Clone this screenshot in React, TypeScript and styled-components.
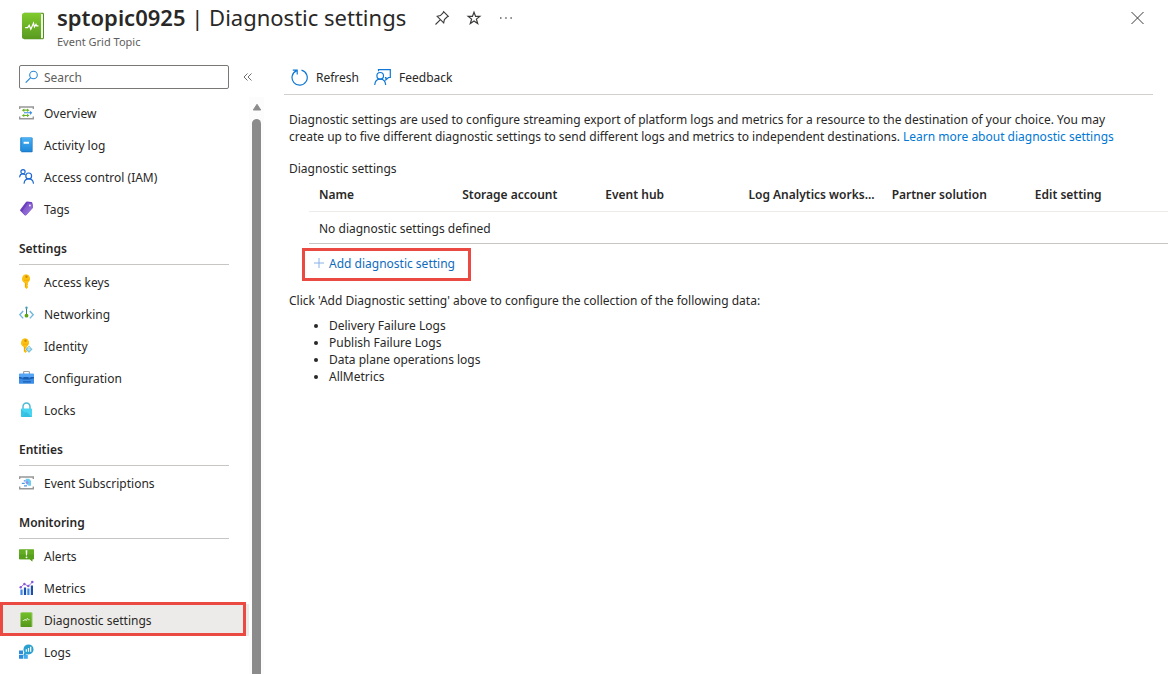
import React, { ReactNode } from "react";
import styled, { createGlobalStyle } from "styled-components";

const text = "#292827";
const muted = "#605e5c";
const link = "#0f6cbd";
const highlight = "#eb4a42";

const GlobalStyle = createGlobalStyle`
  *, *::before, *::after { box-sizing: border-box; }
  body {
    margin: 0;
    background: #fff;
    color: ${text};
    font-family: "Noto Sans", "Open Sans", sans-serif;
    font-size: 12px;
    line-height: 17px;
  }
  button, input { font: inherit; color: inherit; }
`;

const Page = styled.div`
  height: 100vh;
  display: flex;
  flex-direction: column;
  overflow: hidden;
`;

const Header = styled.header`
  display: flex;
  align-items: flex-start;
  padding: 4px 23px 0 20px;
  height: 60px;
  flex: none;
`;

const Logo = styled.svg`
  width: 26px;
  height: 28px;
  margin: 8px 11px 0 0;
  flex: none;
`;

const Title = styled.h1`
  margin: 0;
  font-size: 22px;
  line-height: 26px;
  font-weight: 400;
  white-space: nowrap;

  strong { font-weight: 600; }
`;

const Subtitle = styled.p`
  margin: 4px 0 0;
  font-size: 11px;
  line-height: 16px;
  color: ${muted};
`;

const HeaderActions = styled.div`
  display: flex;
  flex: 1;
  gap: 16px;
  padding: 6px 0 0 28px;
`;

const IconButton = styled.button<{ $end?: boolean }>`
  display: flex;
  align-items: center;
  padding: 0;
  border: 0;
  background: none;
  margin-left: ${(p) => (p.$end ? "auto" : "0")};
  height: 16px;
  cursor: pointer;
`;

const Body = styled.div`
  display: grid;
  grid-template-columns: 264px minmax(0, 1fr);
  flex: 1;
  min-height: 0;
`;

const Sidebar = styled.aside`
  display: flex;
  flex-direction: column;
  min-height: 0;
`;

const SearchRow = styled.div`
  display: flex;
  align-items: center;
  gap: 14px;
  padding: 5px 0 8px 19px;
  flex: none;
`;

const SearchBox = styled.label`
  display: flex;
  align-items: center;
  gap: 5px;
  width: 210px;
  height: 24px;
  padding: 0 5px;
  border: 1px solid #7a7876;
  border-radius: 2px;

  input {
    flex: 1;
    min-width: 0;
    padding: 0;
    border: 0;
    outline: 0;
    background: none;
  }
  input::placeholder { color: ${muted}; opacity: 1; }
`;

const NavArea = styled.div`
  display: flex;
  flex: 1;
  min-height: 0;
`;

const Nav = styled.nav`
  flex: 1;
  min-width: 0;
  overflow: hidden;
`;

const NavHeading = styled.h2`
  height: 40px;
  margin: 0 20px 1px 19px;
  padding-top: 15px;
  border-bottom: 1px solid #c8c6c4;
  font-size: 12px;
  line-height: 17px;
  font-weight: 600;
`;

const NavList = styled.ul`
  list-style: none;
  margin: 0;
  padding: 0;
`;

const NavItem = styled.li<{ $selected?: boolean }>`
  position: relative;
  background: ${(p) => (p.$selected ? "#edebe9" : "transparent")};

  &::after {
    content: "";
    display: ${(p) => (p.$selected ? "block" : "none")};
    position: absolute;
    inset: -2px 3px 0 0;
    border: 3px solid ${highlight};
    pointer-events: none;
  }
`;

const NavLink = styled.a`
  display: flex;
  align-items: center;
  gap: 9px;
  height: 32px;
  padding-left: 19px;
  color: inherit;
  text-decoration: none;

  svg { flex: none; }
`;

const ScrollTrack = styled.div`
  display: flex;
  flex-direction: column;
  align-items: center;
  gap: 8px;
  width: 15px;
  padding-top: 6px;
  background: #fcfcfc;
`;

const ScrollThumb = styled.div`
  flex: 1;
  width: 9px;
  border-radius: 5px 5px 0 0;
  background: #8b8b8b;
`;

const Main = styled.main`
  padding: 0 0 24px 20px;
  min-width: 0;
`;

const Toolbar = styled.div`
  display: flex;
  gap: 15px;
  height: 35px;
  margin-right: 19px;
  padding-left: 7px;
  border-bottom: 1px solid #d2d0ce;
`;

const ToolButton = styled.button`
  display: flex;
  align-items: center;
  gap: 8px;
  padding: 0;
  border: 0;
  background: none;
  cursor: pointer;
`;

const Intro = styled.p`
  margin: 16px 44px 0 5px;
`;

const Anchor = styled.a`
  display: inline-block;
  color: #0078d4;
  text-decoration: none;
`;

const Label = styled.p`
  margin: 15px 0 0 5px;
`;

const TableWrap = styled.div`
  margin: 0 4px 0 25px;
`;

const Table = styled.table`
  width: 100%;
  table-layout: fixed;
  border-collapse: collapse;

  th, td {
    padding: 0 0 0 10px;
    text-align: left;
    white-space: nowrap;
  }
  th {
    height: 34px;
    padding-top: 1px;
    font-weight: 600;
    border-bottom: 1px solid #edebe9;
  }
  td {
    height: 32px;
    padding-top: 2px;
    border-bottom: 1px solid #c8c6c4;
  }
`;

const AddButton = styled.button`
  display: flex;
  align-items: center;
  gap: 5px;
  height: 33px;
  margin: 4px 0 0 18px;
  padding: 0 13px 2px 9px;
  border: 3px solid ${highlight};
  background: none;
  color: ${link};
  cursor: pointer;
`;

const Hint = styled.p`
  margin: 11px 0 0 5px;
`;

const DataList = styled.ul`
  margin: 8px 0 0 5px;
  padding-left: 40px;
`;

function Glyph({ size = 16, children }: { size?: number; children: ReactNode }) {
  return (
    <svg width={size} height={size} viewBox={`0 0 ${size} ${size}`} fill="none" aria-hidden="true">
      {children}
    </svg>
  );
}

const Brackets = () => (
  <path d="M.7 4V2h13.600v2M.7 11.500v2.200h13.600v-2.200" stroke="#979797" strokeWidth="1.400" />
);

const OverviewIcon = () => (
  <Glyph>
    <Brackets />
    <path d="M4 5.200h5M4 10.500h5" stroke="#6bb52d" strokeWidth="1.200" />
    <path d="M8 3.400 10.500 5.200 8 7zM8 8.700l2.500 1.800L8 12.300zM5.300 3.400 2.800 5.200 5.300 7zM5.300 8.700l-2.500 1.800 2.500 1.800z" fill="#6bb52d" />
    <path d="M5 7.800h7.500M11 6.300l1.500 1.500L11 9.300" stroke="#3b8fe0" strokeWidth="1.100" />
  </Glyph>
);

const ActivityIcon = () => (
  <Glyph>
    <defs>
      <linearGradient id="activity" x1="0" y1="0" x2="0" y2="1">
        <stop stopColor="#4bb2f4" />
        <stop offset="1" stopColor="#1f88da" />
      </linearGradient>
    </defs>
    <path d="M2.300.6h10.500c.5 0 .8.300.8.800v13c0 .5-.3.800-.8.800H2.300z" fill="#1f78c4" />
    <path d="M1.600.6H12c.5 0 .8.300.8.800v12c0 .5-.3.800-.8.800H2.600c-.8 0-1.300-.4-1.300-1z" fill="url(#activity)" />
    <path d="M1.300 1.400c0-.5.300-.8.800-.8h.6v13.600c-.9 0-1.400-.4-1.400-1z" fill="#2a8ad6" />
    <rect x="4.600" y="4.800" width="5.400" height="2" rx=".3" fill="#fff" />
  </Glyph>
);

const AccessIcon = () => (
  <Glyph>
    <g stroke="#1a66d2" strokeWidth="1.200" strokeLinecap="round">
      <circle cx="4" cy="2.700" r="2.100" />
      <circle cx="9.700" cy="6.900" r="2.900" />
      <path d="M.7 7.800C.9 6 2.100 4.900 3.900 4.900c.8 0 1.500.2 2.100.6M5.100 14.200c.3-2.700 2-4.300 4.600-4.300s4.400 1.600 4.700 4.300" />
    </g>
  </Glyph>
);

const TagIcon = () => (
  <Glyph>
    <defs>
      <linearGradient id="tag" x1="0" y1="0" x2="1" y2="1">
        <stop stopColor="#6f45c0" />
        <stop offset="1" stopColor="#a57fe2" />
      </linearGradient>
    </defs>
    <path d="M8 .6 12.300.9c.5 0 .9.400 1 .8l.7 4.200c.1.400 0 .8-.3 1.100l-6.500 7.100c-.4.500-1 .5-1.500.1L1.500 9.900c-.5-.4-.5-1-.1-1.500L7 1.100c.3-.3.600-.5 1-.5z" fill="#6b3fbf" />
    <path d="m8.900 2 3.900.4c.3 0 .5.300.6.600l.5 3c0 .4-.1.700-.3 1l-6.300 6.900c-.3.400-.8.400-1.200.1L2.900 11z" fill="url(#tag)" />
    <circle cx="10.900" cy="4.500" r="1" fill="#ede2fb" />
  </Glyph>
);

const KeyShape = () => (
  <>
    <path d="M7.500.3a4.500 4.500 0 0 0-2.200 8.400c.3.200.5.500.5.800v3.800l1.700 1.700 1.500-1.600v-.9l-.8-.8.8-.8v-.8l-.4-.6.5-.6c0-.3.200-.6.500-.8A4.500 4.500 0 0 0 7.500.3z" fill="#fbc212" />
    <path d="M6.300 9h.8v4.700l-.8-.8z" fill="#e59a0a" />
    <path d="M5 6.200h5" stroke="#f0a70c" strokeWidth=".8" />
    <circle cx="7.500" cy="2.700" r="1.200" fill="#d08a10" />
  </>
);

const KeyIcon = () => (
  <Glyph>
    <KeyShape />
  </Glyph>
);

const IdentityIcon = () => (
  <Glyph>
    <g transform="translate(-1 0)">
      <KeyShape />
    </g>
    <path d="m10 7.600 3.600 3.600-3.600 3.700-3.700-3.700z" fill="#5fb3d4" stroke="#fff" strokeWidth=".5" />
    <path d="m10 9.200-1.700 2.300M10 9.200l1.700 2.300M8.300 11.800h3.400M10 9v4.500" stroke="#e2f7ff" strokeWidth=".7" />
  </Glyph>
);

const NetworkIcon = () => (
  <Glyph>
    <path d="M4.200 5 .8 8.700l3.400 3.700M10.800 5l3.400 3.700-3.400 3.700" stroke="#6fb8dc" strokeWidth="1.400" />
    <path d="M7.500 2v7" stroke="#2f7f86" strokeWidth="1" />
    <circle cx="7.500" cy="1.700" r="1.200" fill="#4a9fb0" />
    <circle cx="7.500" cy="9.700" r="1.900" fill="#5ea413" />
  </Glyph>
);

const ConfigIcon = () => (
  <Glyph>
    <path d="M4.600 4V2.200c0-.4.300-.7.700-.7h4.400c.4 0 .7.300.7.700V4" stroke="#a3a3a3" strokeWidth="1.200" />
    <rect y="3.800" width="15" height="10" rx=".6" fill="#3d8ee6" />
    <path d="M0 4.400c0-.3.300-.6.600-.6h13.800c.3 0 .6.300.6.600V7H0z" fill="#56a6f5" />
    <path d="M0 7h2.500v1.200h2V7h5v1.200h2V7H15v1.200l-4.500 1.400h-6L0 8.200z" fill="#1b5cae" />
    <path d="M4 11.200h8v1.300H4z" fill="#2263b5" />
  </Glyph>
);

const LockIcon = () => (
  <Glyph>
    <path d="M4 7.500V4.400a3.500 3.500 0 0 1 7 0v3.100" stroke="#4fbad2" strokeWidth="1.500" />
    <rect x="2" y="6.400" width="11" height="8.600" rx=".6" fill="#48d5f2" />
    <path d="m2.300 14.900 5.200-4.900 5.200 4.900z" fill="#2cb4d8" opacity=".7" />
    <path d="M2 7.400 7 11l-5 3.600z" fill="#35c5e6" />
  </Glyph>
);

const EventSubIcon = () => (
  <Glyph>
    <Brackets />
    <path d="M6.500 3.800H10l2 2v5H9.500L8 9z" fill="#6ccdf0" />
    <path d="M2.800 8.300h3M4.800 5.800h2M5 10.800h3" stroke="#4a9ae4" strokeWidth="1.200" />
    <path d="m8 5.400 1.700 2.200L8 9.700 6.300 7.600z" fill="#8f8fe8" />
  </Glyph>
);

const AlertIcon = () => (
  <Glyph>
    <path d="M.6 1.200h13.800c.3 0 .6.300.6.600v8.800c0 .3-.3.600-.6.600h-1.100v2.200l-2.500-2.200H.6c-.3 0-.6-.3-.6-.6V1.800c0-.3.300-.6.600-.6z" fill="#62ad22" />
    <path d="M0 6.400h15v4.200c0 .3-.3.600-.6.600h-1.100v2.200l-2.500-2.200H.6c-.3 0-.6-.3-.6-.6z" fill="#57a01d" />
    <path d="M6.600 2.300h1.800L8 7.600H7z" fill="#fff" />
    <circle cx="7.500" cy="9.300" r=".9" fill="#fff" />
  </Glyph>
);

const MetricsIcon = () => (
  <Glyph>
    <path d="M1.400 9.500h2.200V15H1.400zM8.300 8.500h2.200V15H8.300z" fill="#3f8ae8" />
    <path d="M4.900 7.500h2.200V15H4.900zM11.800 5.500H14V15h-2.200z" fill="#1d4fa8" />
    <path d="M1.500 7.500 5.300 4l4 2.200L13.500 2" stroke="#a074e0" strokeWidth="1" />
    <g fill="#8a5ad8">
      <circle cx="1.700" cy="7.200" r="1.200" />
      <circle cx="5.400" cy="4" r="1.200" />
      <circle cx="9.300" cy="6" r="1.200" />
      <circle cx="13.300" cy="2" r="1.300" />
    </g>
  </Glyph>
);

const DiagnosticIcon = () => (
  <Glyph>
    <defs>
      <linearGradient id="book" x1="0" y1="0" x2="0" y2="1">
        <stop stopColor="#72bf28" />
        <stop offset="1" stopColor="#55971c" />
      </linearGradient>
    </defs>
    <path d="M3 .6h10c.3 0 .6.300.6.600v13c0 .5-.3.800-.8.800H3z" fill="#a3cf78" />
    <path d="M1.500 1.500c0-.5.400-.9.900-.9h10.200V15H2.500c-.6 0-1-.4-1-1z" fill="url(#book)" />
    <path d="M3.800 8.500h1.400l.9-1.500 1.100 1.800 1.200-2.600.8 1.500h1.500" stroke="#e5f5d5" strokeWidth=".8" />
  </Glyph>
);

const LogsIcon = () => (
  <Glyph>
    <path d="M0 6.400h4v3.700H0zM0 10.700h4v4.100H0z" fill="#2a8cda" />
    <path d="M4.600 10.700h4.200v4.100H4.600z" fill="#46a9ea" />
    <circle cx="9.500" cy="5.400" r="5" fill="#2ba0cf" />
    <path d="m5.500 8-1.300 4 3.800-2z" fill="#2ba0cf" />
    <path d="M7.300 5.200v2.500M9.500 4v3.700M11.700 2.800v4.900" stroke="#fff" strokeWidth="1.200" />
  </Glyph>
);

const sections: { title?: string; items: { label: string; icon: ReactNode; selected?: boolean }[] }[] = [
  {
    items: [
      { label: "Overview", icon: <OverviewIcon /> },
      { label: "Activity log", icon: <ActivityIcon /> },
      { label: "Access control (IAM)", icon: <AccessIcon /> },
      { label: "Tags", icon: <TagIcon /> },
    ],
  },
  {
    title: "Settings",
    items: [
      { label: "Access keys", icon: <KeyIcon /> },
      { label: "Networking", icon: <NetworkIcon /> },
      { label: "Identity", icon: <IdentityIcon /> },
      { label: "Configuration", icon: <ConfigIcon /> },
      { label: "Locks", icon: <LockIcon /> },
    ],
  },
  { title: "Entities", items: [{ label: "Event Subscriptions", icon: <EventSubIcon /> }] },
  {
    title: "Monitoring",
    items: [
      { label: "Alerts", icon: <AlertIcon /> },
      { label: "Metrics", icon: <MetricsIcon /> },
      { label: "Diagnostic settings", icon: <DiagnosticIcon />, selected: true },
      { label: "Logs", icon: <LogsIcon /> },
    ],
  },
];

const columns = [
  "Name",
  "Storage account",
  "Event hub",
  "Log Analytics works...",
  "Partner solution",
  "Edit setting",
];

const logTypes = ["Delivery Failure Logs", "Publish Failure Logs", "Data plane operations logs", "AllMetrics"];

export default function App() {
  return (
    <Page>
      <GlobalStyle />
      <Header>
        <Logo viewBox="0 0 26 28" fill="none" aria-hidden="true">
          <defs>
            <linearGradient id="logo" x1="0" y1="0" x2="0" y2="1">
              <stop stopColor="#7fca2c" />
              <stop offset="1" stopColor="#5a9a20" />
            </linearGradient>
          </defs>
          <path d="M4 .8h18.500c.9 0 1.500.6 1.500 1.500v23.500c0 .9-.6 1.500-1.500 1.500H4z" fill="#4f8f1c" />
          <path d="M4 1.800h18.200c.5 0 .8.300.8.800v22.800c0 .5-.3.800-.8.800H4z" fill="#f1f8ea" />
          <path d="M2 3c0-1.200.8-2 2-2h17v26H4c-1.200 0-2-.8-2-2z" fill="url(#logo)" />
          <path d="M5.200 15.600h2.500l1.500-2.400 1.600 4 2.700-6 .9 3.800 1.600-2.600.6 1.400h1.900" stroke="#fff" strokeWidth="1.200" />
        </Logo>
        <div>
          <Title>
            <strong>sptopic0925</strong> | Diagnostic settings
          </Title>
          <Subtitle>Event Grid Topic</Subtitle>
        </div>
        <HeaderActions>
          <IconButton type="button" aria-label="Pin">
            <Glyph>
              <path d="M9.600 1.700 14.300 6.400 13 7l-2.600 2.600-.7 3.300L3.200 6.300l3.200-.7L9 3zM6.200 9.800 1.500 14.500" stroke="#3b3a39" strokeWidth="1.100" />
            </Glyph>
          </IconButton>
          <IconButton type="button" aria-label="Favorite">
            <Glyph>
              <path d="m8 2.200 1.600 4.200h4.200l-3.400 2.700 1.300 4.400L8 10.900l-3.700 2.600 1.300-4.400L2.200 6.400h4.200z" stroke="#3b3a39" strokeWidth="1.200" />
            </Glyph>
          </IconButton>
          <IconButton type="button" aria-label="More">
            <Glyph>
              <path d="M2 8h1.500M7.200 8h1.500M12.400 8h1.500" stroke="#605e5c" strokeWidth="1.300" />
            </Glyph>
          </IconButton>
          <IconButton type="button" aria-label="Close" $end>
            <Glyph size={24}>
              <path d="m6.500 6 12 12M18.500 6l-12 12" stroke="#3b3a39" strokeWidth="1" />
            </Glyph>
          </IconButton>
        </HeaderActions>
      </Header>
      <Body>
        <Sidebar>
          <SearchRow>
            <SearchBox>
              <Glyph size={14}>
                <circle cx="8.500" cy="5" r="3.800" stroke="#2b88d8" strokeWidth="1.100" />
                <path d="M5.700 7.700.7 12.700" stroke="#2b88d8" strokeWidth="1.200" />
              </Glyph>
              <input type="text" placeholder="Search" aria-label="Search" />
            </SearchBox>
            <IconButton type="button" aria-label="Collapse menu">
              <Glyph size={10}>
                <path d="M4.500 1.500 1 5l3.500 3.500M8.500 1.500 5 5l3.500 3.500" stroke="#605e5c" strokeWidth=".9" />
              </Glyph>
            </IconButton>
          </SearchRow>
          <NavArea>
            <Nav>
              {sections.map((section, i) => (
                <React.Fragment key={i}>
                  {section.title && <NavHeading>{section.title}</NavHeading>}
                  <NavList>
                    {section.items.map((item) => (
                      <NavItem key={item.label} $selected={item.selected}>
                        <NavLink href="#" aria-current={item.selected ? "page" : undefined}>
                          {item.icon}
                          {item.label}
                        </NavLink>
                      </NavItem>
                    ))}
                  </NavList>
                </React.Fragment>
              ))}
            </Nav>
            <ScrollTrack>
              <svg width="10" height="8" viewBox="0 0 10 8" aria-hidden="true">
                <path d="M5 1.300 8.700 7H1.300z" fill="#8b8b8b" stroke="#8b8b8b" strokeLinejoin="round" />
              </svg>
              <ScrollThumb />
            </ScrollTrack>
          </NavArea>
        </Sidebar>
        <Main>
          <Toolbar>
            <ToolButton type="button">
              <Glyph size={17}>
                <path d="M10.500 1.200A7.600 7.600 0 1 1 5.600 1.600M1.800 1.200h4.400v4.300" stroke="#0f78d4" strokeWidth="1.200" />
              </Glyph>
              Refresh
            </ToolButton>
            <ToolButton type="button">
              <Glyph size={17}>
                <g stroke="#0f78d4" strokeWidth="1.200">
                  <circle cx="6.200" cy="6.800" r="3.300" />
                  <path d="M.7 16c.3-3.700 2.300-5.900 5.500-5.900s5.200 2.200 5.500 5.900M4.500 2.300V.7h11.800v7.800h-1.800l-2.600 2.400V8.500h-1" />
                </g>
              </Glyph>
              Feedback
            </ToolButton>
          </Toolbar>
          <Intro>
            Diagnostic settings are used to configure streaming export of platform logs and metrics for a resource to
            the destination of your choice. You may create up to five different diagnostic settings to send different
            logs and metrics to independent destinations.{" "}
            <Anchor href="#">Learn more about diagnostic settings</Anchor>
          </Intro>
          <Label>Diagnostic settings</Label>
          <TableWrap>
            <Table aria-label="Diagnostic settings">
              <thead>
                <tr>
                  {columns.map((c) => (
                    <th key={c} scope="col">{c}</th>
                  ))}
                </tr>
              </thead>
              <tbody>
                <tr>
                  <td colSpan={6}>No diagnostic settings defined</td>
                </tr>
              </tbody>
            </Table>
          </TableWrap>
          <AddButton type="button">
            <Glyph size={10}>
              <path d="M5 0v10M0 5h10" stroke="#8ab0e8" />
            </Glyph>
            Add diagnostic setting
          </AddButton>
          <Hint>Click 'Add Diagnostic setting' above to configure the collection of the following data:</Hint>
          <DataList>
            {logTypes.map((t) => (
              <li key={t}>{t}</li>
            ))}
          </DataList>
        </Main>
      </Body>
    </Page>
  );
}
